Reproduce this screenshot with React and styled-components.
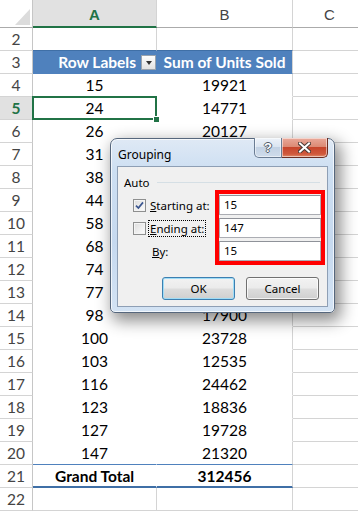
import React from "react";
import styled, { createGlobalStyle } from "styled-components";

const GlobalStyle = createGlobalStyle`
  html, body {
    margin: 0;
    padding: 0;
    background: #fff;
    overflow: hidden;
  }
`;

const COLS = "33px 124px 136px 74px";
const GRID = "#d4d4d4";
const GREEN = "#217346";
const PIVOT = "#4f81bd";
const PIVOT_DARK = "#3f6fa6";

const Sheet = styled.div`
  position: relative;
  width: 358px;
  height: 511px;
  overflow: hidden;
  font-family: Lato, "Liberation Sans", sans-serif;
  font-size: 15.5px;
  color: #000;
`;

const Row = styled.div`
  display: grid;
  grid-template-columns: ${COLS};
  height: ${(p) => p.$h || 23}px;
`;

const Corner = styled.div`
  box-sizing: border-box;
  border-right: 1px solid #c6c6c6;
  border-bottom: 1px solid #ababab;
  background: #fff;
  display: flex;
`;

const ColHead = styled.div`
  box-sizing: border-box;
  display: flex;
  align-items: center;
  justify-content: center;
  padding-top: 2px;
  background: ${(p) => (p.$active ? "#e1e1e1" : "#fff")};
  color: ${(p) => (p.$active ? GREEN : "#444")};
  font-family: "Liberation Sans", Arial, sans-serif;
  font-size: 15px;
  font-weight: ${(p) => (p.$active ? 700 : 400)};
  border-right: 1px solid ${GRID};
  border-bottom: ${(p) => (p.$active ? `2px solid ${GREEN}` : "1px solid #ababab")};
`;

const RowHead = styled.div`
  box-sizing: border-box;
  display: flex;
  align-items: center;
  justify-content: center;
  background: ${(p) => (p.$active ? "#e1e1e1" : "#fff")};
  color: ${(p) => (p.$active ? GREEN : "#444")};
  font-weight: ${(p) => (p.$active ? 700 : 400)};
  border-right: 1px solid #c6c6c6;
  border-bottom: 1px solid ${GRID};
`;

const GridCell = styled.div`
  box-sizing: border-box;
  border-right: 1px solid ${GRID};
  border-bottom: 1px solid ${(p) => p.$edge || GRID};
`;

const PivotHeadCell = styled.div`
  box-sizing: border-box;
  display: flex;
  align-items: center;
  justify-content: ${(p) => p.$justify || "center"};
  gap: 5px;
  background: ${PIVOT};
  color: #fff;
  font-weight: 700;
  white-space: nowrap;
  border-right: 1px solid ${(p) => (p.$last ? GRID : PIVOT)};
  border-bottom: 1px solid ${PIVOT};
`;

const PivotCell = styled.div`
  position: relative;
  box-sizing: border-box;
  display: flex;
  align-items: center;
  justify-content: center;
  background: #fff;
  border-right: 1px solid ${(p) => (p.$last ? GRID : "#fff")};
  border-bottom: 1px solid ${(p) => (p.$edge ? PIVOT : "#fff")};

  ${(p) =>
    p.$selected &&
    `
    &::after {
      content: "";
      position: absolute;
      left: -1px;
      top: -1px;
      right: -1px;
      bottom: -1px;
      border: 2px solid ${GREEN};
    }
    &::before {
      content: "";
      position: absolute;
      right: -3px;
      bottom: -3px;
      width: 5px;
      height: 5px;
      background: ${GREEN};
      outline: 1px solid #fff;
      z-index: 1;
    }
  `}
`;

const TotalCell = styled.div`
  box-sizing: border-box;
  display: flex;
  align-items: center;
  justify-content: ${(p) => (p.$left ? "flex-start" : "center")};
  padding-left: ${(p) => (p.$left ? 22 : 0)}px;
  font-weight: 700;
  white-space: nowrap;
  border-right: 1px solid ${(p) => (p.$last ? GRID : "#fff")};
  border-bottom: 2px solid ${PIVOT_DARK};
`;

const FilterBtn = styled.span`
  box-sizing: border-box;
  width: 15px;
  height: 15px;
  border: 1px solid #9aa3ad;
  background: linear-gradient(#fdfdfd, #e2e2e2);
  display: flex;
  align-items: center;
  justify-content: center;

  &::after {
    content: "";
    border-left: 3.5px solid transparent;
    border-right: 3.5px solid transparent;
    border-top: 4px solid #333;
    margin-top: 1px;
  }
`;

/* ---------- dialog ---------- */

const Window = styled.div`
  position: absolute;
  left: 110px;
  top: 138px;
  width: 225px;
  height: 175px;
  box-sizing: border-box;
  display: flex;
  flex-direction: column;
  padding: 0 6px 5px;
  border: 1px solid #56677d;
  border-radius: 7px 7px 5px 5px;
  background: linear-gradient(180deg, #dfe9f5 0%, #cddff2 18%, #c6d9ef 60%, #d3e3f4 100%);
  box-shadow: inset 0 0 0 1px rgba(255, 255, 255, 0.7), 4px 6px 16px 2px rgba(0, 0, 0, 0.45);
  font-family: "Noto Sans", "Open Sans", sans-serif;
  font-size: 11.5px;
  color: #000;
`;

const TitleBar = styled.div`
  height: 27px;
  display: flex;
  align-items: flex-start;
`;

const Title = styled.div`
  padding: 8px 0 0 1px;
  line-height: 15px;
  font-size: 12px;
`;

const CaptionButtons = styled.div`
  margin-left: auto;
  margin-top: -1px;
  display: flex;
`;

const CaptionBtn = styled.div`
  box-sizing: border-box;
  width: ${(p) => (p.$close ? 46 : 28)}px;
  height: 20px;
  display: flex;
  align-items: center;
  justify-content: center;
  border: 1px solid ${(p) => (p.$close ? "#6b2d22" : "#6a7c93")};
  border-top: none;
  border-left-width: ${(p) => (p.$close ? 0 : 1)}px;
  border-radius: ${(p) => (p.$close ? "0 0 5px 0" : "0 0 0 5px")};
  background: ${(p) =>
    p.$close
      ? "linear-gradient(180deg, #e9a99a 0%, #dc8a75 45%, #c7452c 50%, #d0593c 85%, #e08d6c 100%)"
      : "linear-gradient(180deg, #eef3f9 0%, #dbe5f1 45%, #c3d2e4 50%, #cfdceb 100%)"};
  box-shadow: inset 0 0 0 1px rgba(255, 255, 255, 0.5);
`;

const HelpGlyph = styled.span`
  font-family: "Liberation Sans", Arial, sans-serif;
  font-weight: 700;
  font-size: 13px;
  line-height: 13px;
  color: #fff;
  text-shadow: 1px 0 0 #505a66, -1px 0 0 #505a66, 0 1px 0 #505a66, 0 -1px 0 #505a66;
`;

const Client = styled.div`
  flex: 1;
  box-sizing: border-box;
  display: flex;
  flex-direction: column;
  padding: 7px 6px 6px;
  background: #f0f0f0;
  border: 1px solid #8e9fb5;
`;

const GroupHead = styled.div`
  height: 16px;
  display: flex;
  align-items: center;
`;

const GroupLine = styled.div`
  flex: 1;
  height: 1px;
  margin: 0 1px 0 7px;
  background: #d5dfe5;
`;

const Form = styled.div`
  display: flex;
  height: 75px;
  margin-right: -4px;
`;

const Labels = styled.div`
  width: 91px;
  box-sizing: border-box;
  padding: 5px 0 0 9px;
  display: flex;
  flex-direction: column;
  gap: 3px;
`;

const Line = styled.div`
  height: 20px;
  display: flex;
  align-items: center;
  padding-left: ${(p) => p.$indent || 0}px;
`;

const Box = styled.span`
  box-sizing: border-box;
  width: 13px;
  height: 13px;
  border: 1px solid #8e8f8f;
  background: linear-gradient(135deg, #dcdcdc, #fdfdfd);
  box-shadow: inset 0 0 0 1px #f4f4f4;
  display: flex;
  align-items: center;
  justify-content: center;
`;

const LabelText = styled.span`
  margin-left: 2px;
  padding: 0 1px;
  line-height: 15px;
  border: 1px dotted ${(p) => (p.$focus ? "#000" : "transparent")};
  white-space: nowrap;
`;

const RedBox = styled.div`
  box-sizing: border-box;
  width: 110px;
  height: 75px;
  border: 4px solid #ff0000;
  padding-top: 1px;
  display: flex;
  flex-direction: column;
  gap: 3px;
`;

const Field = styled.div`
  box-sizing: border-box;
  height: 20px;
  padding-left: 4px;
  line-height: 18px;
  background: #fff;
  border: 1px solid #abadb3;
  border-top-color: #8f9299;
`;

const ButtonRow = styled.div`
  margin-top: 12px;
  padding-right: 2px;
  display: flex;
  justify-content: flex-end;
  gap: 11px;
`;

const DlgButton = styled.div`
  box-sizing: border-box;
  width: 73px;
  height: 23px;
  display: flex;
  align-items: center;
  justify-content: center;
  border: 1px solid ${(p) => (p.$default ? "#3c7fb1" : "#707070")};
  border-radius: 3px;
  background: linear-gradient(180deg, #f2f2f2 0%, #ebebeb 48%, #dddddd 52%, #cfcfcf 100%);
  box-shadow: inset 0 0 0 1px ${(p) => (p.$default ? "#9fdcf6" : "rgba(255,255,255,0.75)")};
`;

// units for rows 7-13 sit under the dialog and are not shown
const rows = [
  [4, 15, 19921],
  [5, 24, 14771],
  [6, 26, 20127],
  [7, 31, null],
  [8, 38, null],
  [9, 44, null],
  [10, 58, null],
  [11, 68, null],
  [12, 74, null],
  [13, 77, null],
  [14, 98, 17900],
  [15, 100, 23728],
  [16, 103, 12535],
  [17, 116, 24462],
  [18, 123, 18836],
  [19, 127, 19728],
  [20, 147, 21320],
];

function CornerMark() {
  return (
    <svg width="32" height="27" viewBox="0 0 32 27">
      <polygon points="15,25 30,25 30,9" fill="#dcdcdc" />
    </svg>
  );
}

function CheckMark() {
  return (
    <svg width="9" height="9" viewBox="0 0 9 9">
      <path d="M1 4.6 L3.4 7 L8 1.4" fill="none" stroke="#3b5690" strokeWidth="1.7" />
    </svg>
  );
}

function CloseGlyph() {
  return (
    <svg width="13" height="11" viewBox="0 0 13 11">
      <path d="M2 1.5 L11 9.5 M11 1.5 L2 9.5" stroke="#4a3a36" strokeWidth="4" strokeLinecap="square" />
      <path d="M2 1.5 L11 9.5 M11 1.5 L2 9.5" stroke="#fff" strokeWidth="2" strokeLinecap="square" />
    </svg>
  );
}

function GroupingDialog() {
  return (
    <Window>
      <TitleBar>
        <Title>Grouping</Title>
        <CaptionButtons>
          <CaptionBtn>
            <HelpGlyph>?</HelpGlyph>
          </CaptionBtn>
          <CaptionBtn $close>
            <CloseGlyph />
          </CaptionBtn>
        </CaptionButtons>
      </TitleBar>
      <Client>
        <GroupHead>
          <span>Auto</span>
          <GroupLine />
        </GroupHead>
        <Form>
          <Labels>
            <Line>
              <Box>
                <CheckMark />
              </Box>
              <LabelText>
                <u>S</u>tarting at:
              </LabelText>
            </Line>
            <Line>
              <Box />
              <LabelText $focus>
                <u>E</u>nding at:
              </LabelText>
            </Line>
            <Line $indent={15}>
              <LabelText>
                <u>B</u>y:
              </LabelText>
            </Line>
          </Labels>
          <RedBox>
            <Field>15</Field>
            <Field>147</Field>
            <Field>15</Field>
          </RedBox>
        </Form>
        <ButtonRow>
          <DlgButton $default>OK</DlgButton>
          <DlgButton>Cancel</DlgButton>
        </ButtonRow>
      </Client>
    </Window>
  );
}

export default function App() {
  return (
    <>
      <GlobalStyle />
      <Sheet>
        <Row $h={28}>
          <Corner>
            <CornerMark />
          </Corner>
          <ColHead $active>A</ColHead>
          <ColHead>B</ColHead>
          <ColHead>C</ColHead>
        </Row>

        <Row>
          <RowHead>2</RowHead>
          <GridCell $edge={PIVOT_DARK} />
          <GridCell $edge={PIVOT_DARK} />
          <GridCell />
        </Row>

        <Row>
          <RowHead>3</RowHead>
          <PivotHeadCell $justify="flex-end">
            Row Labels
            <FilterBtn />
          </PivotHeadCell>
          <PivotHeadCell $last>Sum of Units Sold</PivotHeadCell>
          <GridCell />
        </Row>

        {rows.map(([n, label, units]) => (
          <Row key={n}>
            <RowHead $active={n === 5}>{n}</RowHead>
            <PivotCell $selected={n === 5} $edge={n === 20}>
              {label}
            </PivotCell>
            <PivotCell $last $edge={n === 20}>
              {units}
            </PivotCell>
            <GridCell />
          </Row>
        ))}

        <Row>
          <RowHead>21</RowHead>
          <TotalCell $left>Grand Total</TotalCell>
          <TotalCell $last>312456</TotalCell>
          <GridCell />
        </Row>

        <Row>
          <RowHead>22</RowHead>
          <GridCell />
          <GridCell />
          <GridCell />
        </Row>

        <GroupingDialog />
      </Sheet>
    </>
  );
}
